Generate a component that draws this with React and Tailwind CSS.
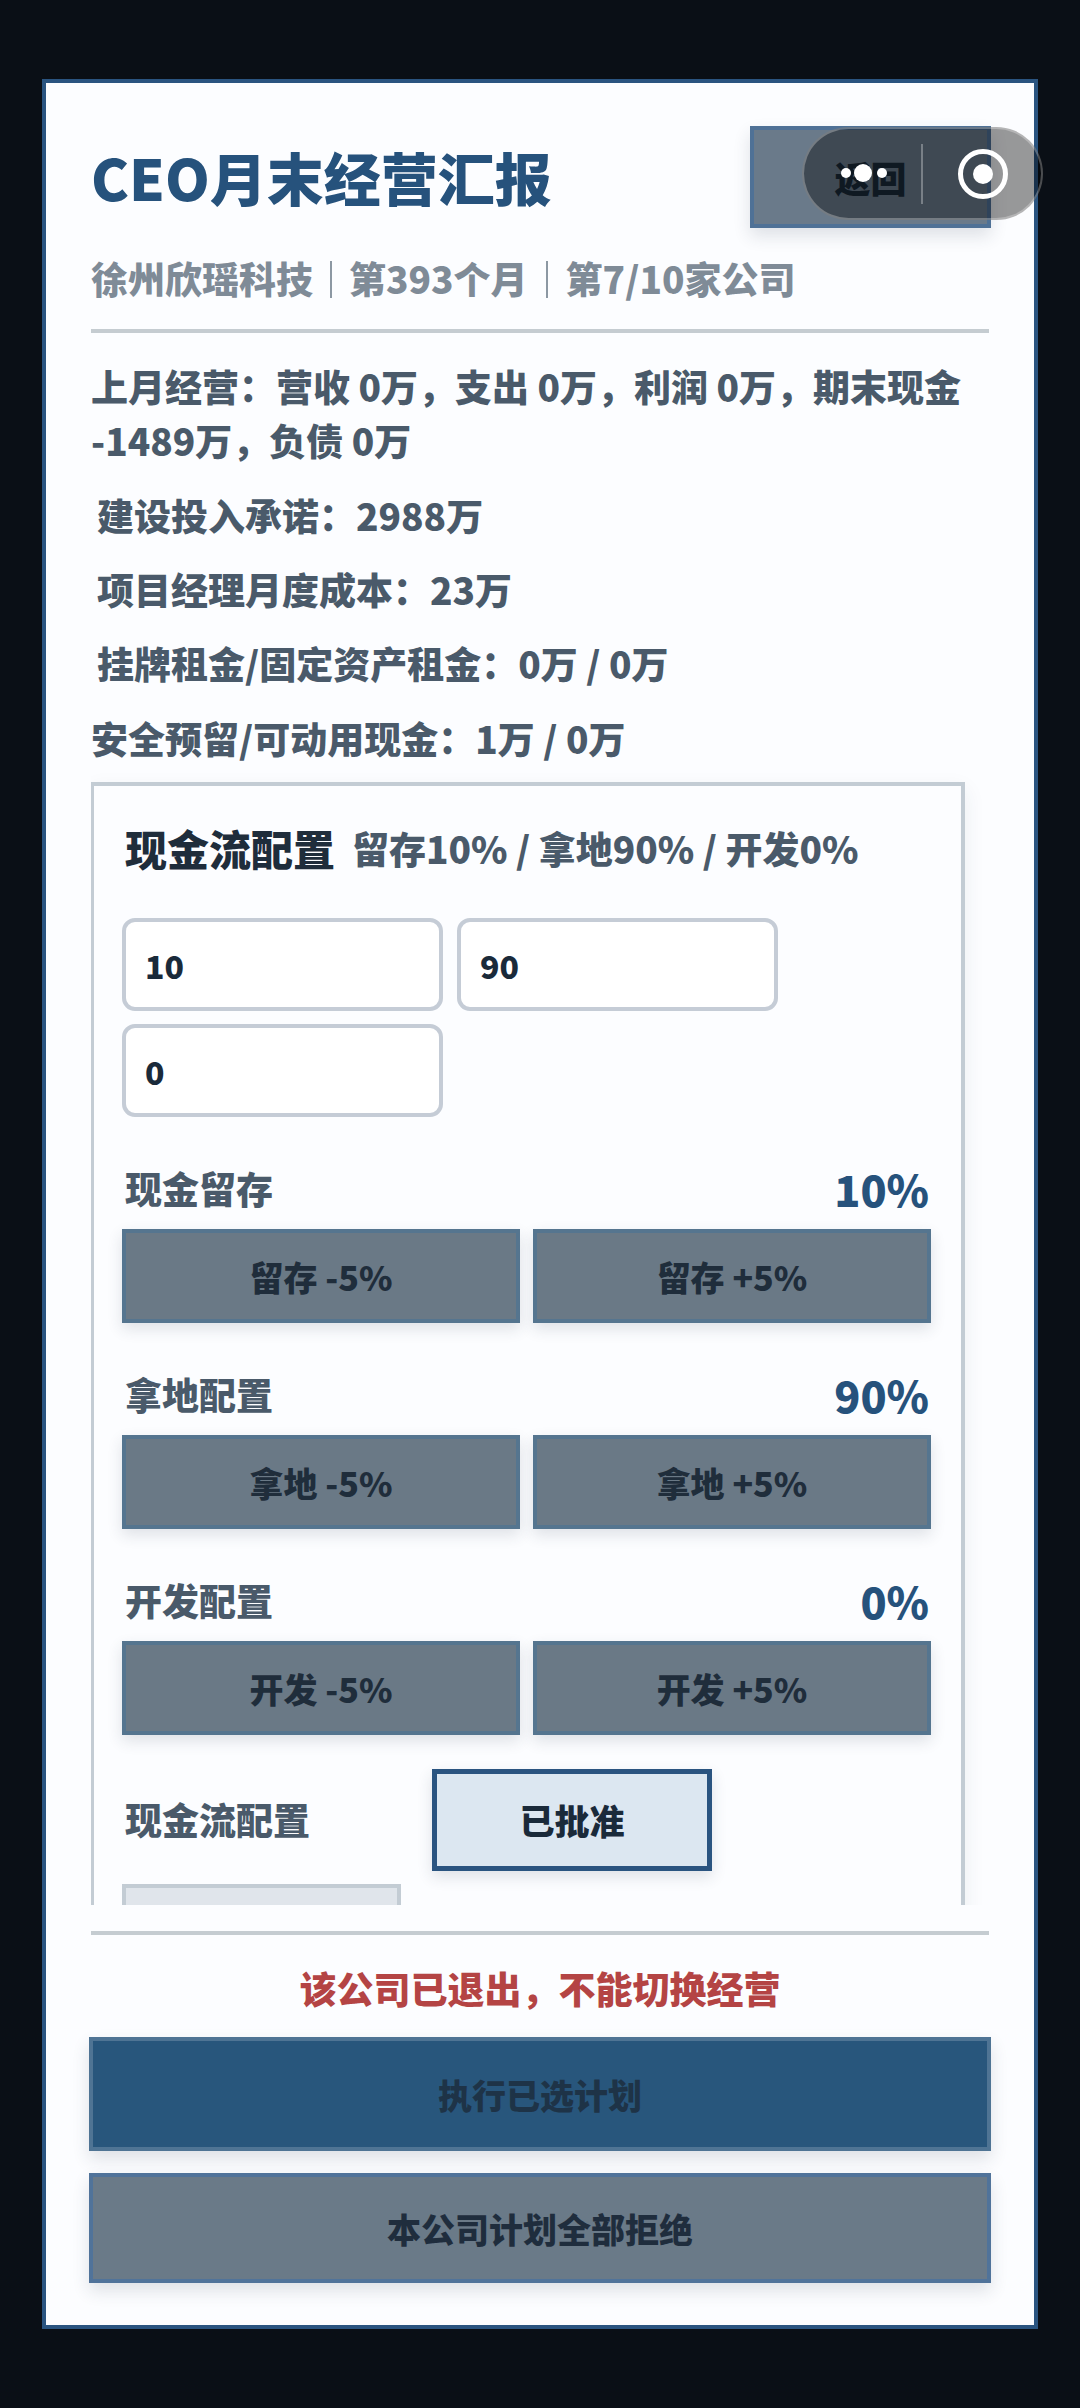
const font = '[font-family:"Noto_Sans_CJK_SC","Noto_Sans",sans-serif]';

// full-width punctuation, kept as escapes so it survives editing
const COLON = '\uFF1A';
const COMMA = '\uFF0C';

const StepRow = ({ label, value, name }) => (
  <div className="mt-[44px] first-of-type:mt-[44px]">
    <div className="flex items-center justify-between h-[54px] pl-[3px] pr-[2px]">
      <span className="text-[37px] leading-[54px] font-black text-[#4a5a6a]">{label}</span>
      <span className="text-[43px] leading-[54px] font-black text-[#26527c]">{value}</span>
    </div>
    <div className="mt-[14px] grid grid-cols-2 gap-[13px]">
      <button className="h-[94px] border-[4px] border-[#55758f] bg-[#6a7986] text-[34px] font-black text-[#1f2d3b] shadow-[0_6px_14px_rgba(40,60,80,0.14)]">
        {name} -5%
      </button>
      <button className="h-[94px] border-[4px] border-[#55758f] bg-[#6a7986] text-[34px] font-black text-[#1f2d3b] shadow-[0_6px_14px_rgba(40,60,80,0.14)]">
        {name} +5%
      </button>
    </div>
  </div>
);

const NumberBox = ({ value }) => (
  <input
    readOnly
    value={value}
    className="h-[93px] w-[321px] rounded-[13px] border-[4px] border-[#c5ccd6] bg-white px-[19px] text-[32px] font-black text-[#1a2a3a] outline-none"
  />
);

const Capsule = () => (
  <div className="absolute left-[802px] top-[127px] flex h-[93px] w-[241px] items-center rounded-full border-2 border-[rgba(255,255,255,0.28)] bg-[rgba(0,0,0,0.4)]">
    <svg width="241" height="93" viewBox="0 0 241 93" className="absolute -left-[2px] -top-[2px]">
      <circle cx="44" cy="46" r="5" fill="#fff" />
      <circle cx="61" cy="46" r="9" fill="#fff" />
      <circle cx="80" cy="46" r="5" fill="#fff" />
      <rect x="119" y="17" width="2" height="60" fill="rgba(255,255,255,0.3)" />
      <circle cx="181" cy="47" r="22.5" fill="none" stroke="#fff" strokeWidth="5" />
      <circle cx="181" cy="47" r="10" fill="#fff" />
    </svg>
  </div>
);

export default function App() {
  return (
    <div className={`relative h-[2408px] w-[1080px] overflow-hidden bg-[#0a0f16] pl-[42px] pt-[79px] ${font}`}>
      <div className="flex h-[2250px] w-[996px] flex-col border-[4px] border-[#2a5480] bg-[#fcfdff] px-[45px]">
        {/* header */}
        <div className="shrink-0 border-b-[4px] border-[#c5ccd1] pb-[31px]">
          <div className="flex items-start justify-between pt-[43px]">
            <h1 className="text-[57px] leading-[100px] font-black text-[#26527c]">CEO月末经营汇报</h1>
            <button className="-mr-[2px] h-[102px] w-[241px] border-[4px] border-[#4f7196] bg-[#6a7a8a] text-[36px] font-black text-[#1a2a3a] shadow-[0_8px_16px_rgba(40,60,80,0.14)]">
              返回
            </button>
          </div>
          <div className="mt-[32px] flex h-[38px] items-center text-[37px] font-black text-[#7f8b97]">
            <span>徐州欣瑶科技</span>
            <i className="mx-[17px] h-[37px] w-[2px] bg-[#8c98a3]" />
            <span>第393个月</span>
            <i className="mx-[18px] h-[37px] w-[2px] bg-[#8c98a3]" />
            <span>第7/10家公司</span>
          </div>
        </div>

        {/* scroll area */}
        <div className="min-h-0 flex-1 overflow-hidden pr-[24px]">
          <div className="pt-[26px] text-[37px] leading-[54px] font-black text-[#4a5a6a]">
            <p>{`上月经营${COLON}营收 0万${COMMA}支出 0万${COMMA}利润 0万${COMMA}期末现金 -1489万${COMMA}负债 0万`}</p>
            <p className="mt-[21px] pl-[6px]">{`建设投入承诺${COLON}2988万`}</p>
            <p className="mt-[20px] pl-[6px]">{`项目经理月度成本${COLON}23万`}</p>
            <p className="mt-[20px] pl-[6px]">{`挂牌租金/固定资产租金${COLON}0万 / 0万`}</p>
            <p className="mt-[21px]">{`安全预留/可动用现金${COLON}1万 / 0万`}</p>
          </div>

          <div className="mt-[17px] border-[4px] border-l-[3px] border-[#c3ccd4] pl-[28px] pr-[30px] pt-[27px] pb-[40px] shadow-[0_8px_20px_rgba(40,60,80,0.08)]">
            <div className="flex items-center h-[70px] pl-[3px]">
              <span className="text-[42px] leading-[70px] font-black text-[#1f2d3b]">现金流配置</span>
              <span className="ml-[17px] text-[37px] leading-[70px] font-black text-[#4a5a6a]">留存10% / 拿地90% / 开发0%</span>
            </div>
            <div className="mt-[35px] flex flex-wrap gap-x-[14px] gap-y-[13px]">
              <NumberBox value="10" />
              <NumberBox value="90" />
              <NumberBox value="0" />
            </div>
            <StepRow label="现金留存" value="10%" name="留存" />
            <StepRow label="拿地配置" value="90%" name="拿地" />
            <StepRow label="开发配置" value="0%" name="开发" />
            <div className="mt-[34px] flex items-center">
              <span className="w-[310px] pl-[3px] text-[37px] font-black text-[#4a5a6a]">现金流配置</span>
              <button className="h-[102px] w-[280px] border-[5px] border-[#2a5480] bg-[#dce7f1] text-[35px] font-black text-[#1a2a3a] shadow-[0_6px_14px_rgba(40,60,80,0.14)]">
                已批准
              </button>
            </div>
            <div className="mt-[13px] h-[102px] w-[279px] border-[4px] border-[#c3ccd4] bg-[#e0e5eb]" />
          </div>
        </div>

        {/* footer */}
        <div className="shrink-0 pb-[42px]">
          <div className="mt-[26px] border-t-[4px] border-[#c5ccd1] pt-[30px] text-center text-[37px] leading-[46px] font-black text-[#b44444]">
            {`该公司已退出${COMMA}不能切换经营`}
          </div>
          <button className="-mx-[2px] mt-[26px] block h-[114px] w-[902px] border-[4px] border-[#4f7494] bg-[#28567c] text-[34px] font-black text-[#1e3347] shadow-[0_8px_16px_rgba(40,60,80,0.14)]">
            执行已选计划
          </button>
          <button className="-mx-[2px] mt-[22px] block h-[110px] w-[902px] border-[4px] border-[#50739a] bg-[#6a7a88] text-[34px] font-black text-[#1f2d3d] shadow-[0_8px_16px_rgba(40,60,80,0.14)]">
            本公司计划全部拒绝
          </button>
        </div>
      </div>
      <Capsule />
    </div>
  );
}
